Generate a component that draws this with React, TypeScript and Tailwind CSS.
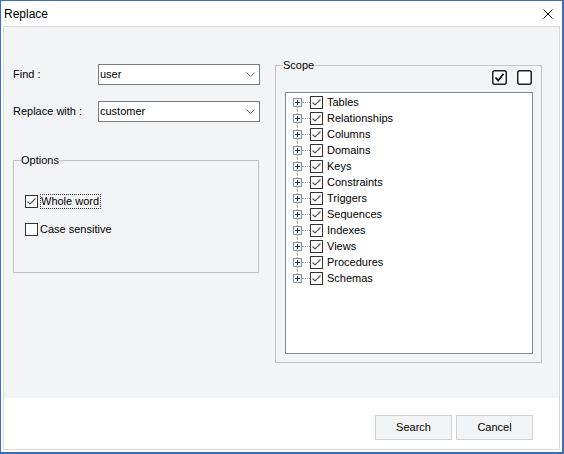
import React from "react";

const scopeItems = [
  "Tables",
  "Relationships",
  "Columns",
  "Domains",
  "Keys",
  "Constraints",
  "Triggers",
  "Sequences",
  "Indexes",
  "Views",
  "Procedures",
  "Schemas",
];

function CheckBox({ checked }: { checked: boolean }) {
  return (
    <svg width="13" height="13" viewBox="0 0 13 13" className="shrink-0 block">
      <rect x="0.5" y="0.5" width="12" height="12" fill="#fff" stroke="#333" />
      {checked ? (
        <path d="M2.5 6.5 L5 9 L10.5 3.5" fill="none" stroke="#555" strokeWidth="1.2" />
      ) : null}
    </svg>
  );
}

function BigCheck({ checked }: { checked: boolean }) {
  return (
    <svg width="15" height="15" viewBox="0 0 15 15" className="block">
      <rect x="0.75" y="0.75" width="13.5" height="13.5" rx="2" fill="#fff" stroke="#222" strokeWidth="1.5" />
      {checked ? (
        <path d="M3.5 7.5 L6.2 10.5 L11.5 3.8" fill="none" stroke="#111" strokeWidth="1.8" />
      ) : null}
    </svg>
  );
}

function Combo({ value }: { value: string }) {
  return (
    <div className="w-[162px] h-[21px] border border-[#7a7a7a] bg-white flex items-center justify-between pl-[1px] pr-[4px]">
      <span className="leading-none">{value}</span>
      <svg width="9" height="5" viewBox="0 0 9 5">
        <path d="M0.5 0.5 L4.5 4.5 L8.5 0.5" fill="none" stroke="#666" strokeWidth="1" />
      </svg>
    </div>
  );
}

function TreeRow({ label, first, last }: { label: string; first: boolean; last: boolean }) {
  return (
    <div className="h-[16px] flex items-center pl-[7px]">
      <span className="relative w-[9px] h-full flex items-center">
        <span
          className={
            "absolute left-[4px] border-l border-dotted border-[#a0a0a0] " +
            (first ? "top-[8px] bottom-0" : last ? "top-0 h-[8px]" : "top-0 bottom-0")
          }
        />
        <svg width="9" height="9" viewBox="0 0 9 9" className="relative block">
          <rect x="0.5" y="0.5" width="8" height="8" fill="#f7f7f7" stroke="#919191" />
          <path d="M2 4.5 H7 M4.5 2 V7" stroke="#1e395b" strokeWidth="1" />
        </svg>
      </span>
      <span className="w-[8px] border-t border-dotted border-[#a0a0a0]" />
      <CheckBox checked />
      <span className="ml-[4px] leading-none">{label}</span>
    </div>
  );
}

export default function App() {
  return (
    <div
      className="w-[564px] h-[454px] bg-white border-l border-t border-r-2 border-b-2 border-[#3a6fb8] flex flex-col text-[11px] text-black"
      style={{ fontFamily: '"Liberation Sans", Arial, sans-serif' }}
    >
      <div className="h-[25px] shrink-0 flex items-center justify-between pl-[3px] pr-[9px]">
        <span className="text-[12px]">Replace</span>
        <svg width="10" height="10" viewBox="0 0 10 10">
          <path d="M0.5 0.5 L9.5 9.5 M9.5 0.5 L0.5 9.5" stroke="#111" strokeWidth="1" />
        </svg>
      </div>

      <div className="flex-1 ml-[2px] mr-[2px] mb-[2px] border border-[#d9d9d9] flex flex-col">
        <div className="h-[371px] shrink-0 bg-[#f3f4f6] flex items-start pl-[9px] pt-[37px]">
          <div className="w-[247px] flex flex-col">
            <div className="flex items-center">
              <span className="w-[85px]">Find :</span>
              <Combo value="user" />
            </div>
            <div className="flex items-center mt-[16px]">
              <span className="w-[85px]">Replace with :</span>
              <Combo value="customer" />
            </div>

            <div className="relative mt-[38px] w-[246px] h-[113px] border border-[#c3c3c3] pl-[11px] pt-[34px]">
              <span className="absolute left-[7px] top-[-8px] leading-[14px] bg-[#f3f4f6]">Options</span>
              <div className="flex items-center h-[13px]">
                <CheckBox checked />
                <span className="ml-[2px] h-[15px] pr-[1px] flex items-center border border-dotted border-[#333]">
                  Whole word
                </span>
              </div>
              <div className="flex items-center h-[13px] mt-[15px]">
                <CheckBox checked={false} />
                <span className="ml-[2px]">Case sensitive</span>
              </div>
            </div>
          </div>

          <div className="relative ml-[15px] mt-[1px] w-[267px] h-[298px] border border-[#c3c3c3] flex flex-col">
            <span className="absolute left-[7px] top-[-8px] leading-[14px] bg-[#f3f4f6]">Scope</span>
            <div className="flex justify-end gap-[10px] pr-[9px] mt-[4px]">
              <BigCheck checked />
              <BigCheck checked={false} />
            </div>
            <div className="ml-[9px] mt-[7px] w-[248px] h-[262px] border border-[#828790] bg-white pt-[1px]">
              {scopeItems.map((s, i) => (
                <TreeRow key={s} label={s} first={i === 0} last={i === scopeItems.length - 1} />
              ))}
            </div>
          </div>
        </div>

        <div className="flex-1 bg-white flex justify-end items-start gap-[4px] pt-[17px] pr-[26px]">
          <button className="w-[77px] h-[25px] bg-[#f3f4f6] border border-[#d0d0d0] text-[11px]">Search</button>
          <button className="w-[77px] h-[25px] bg-[#f3f4f6] border border-[#d0d0d0] text-[11px]">Cancel</button>
        </div>
      </div>
    </div>
  );
}
